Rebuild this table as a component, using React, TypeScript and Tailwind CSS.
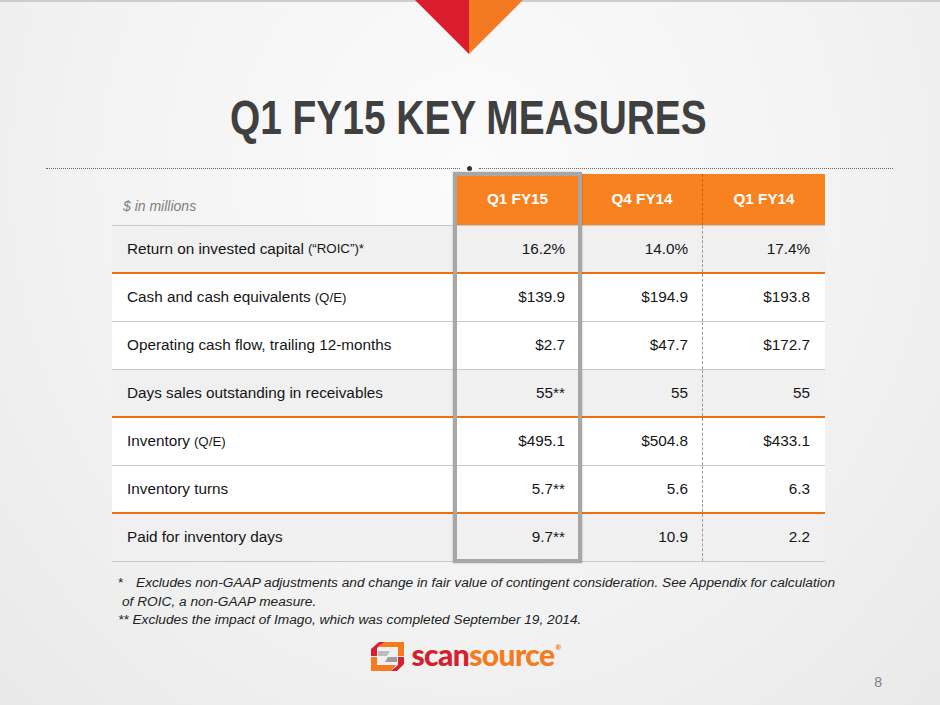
import React from 'react';

type Row = {
  label: string;
  note?: string;
  values: [string, string, string];
  shaded: boolean;
  line: 'orange' | 'gray';
};

const rows: Row[] = [
  { label: 'Return on invested capital', note: '(“ROIC”)*', values: ['16.2%', '14.0%', '17.4%'], shaded: true, line: 'orange' },
  { label: 'Cash and cash equivalents', note: '(Q/E)', values: ['$139.9', '$194.9', '$193.8'], shaded: false, line: 'gray' },
  { label: 'Operating cash flow, trailing 12-months', values: ['$2.7', '$47.7', '$172.7'], shaded: false, line: 'gray' },
  { label: 'Days sales outstanding in receivables', values: ['55**', '55', '55'], shaded: true, line: 'orange' },
  { label: 'Inventory', note: '(Q/E)', values: ['$495.1', '$504.8', '$433.1'], shaded: false, line: 'gray' },
  { label: 'Inventory turns', values: ['5.7**', '5.6', '6.3'], shaded: false, line: 'orange' },
  { label: 'Paid for inventory days', values: ['9.7**', '10.9', '2.2'], shaded: true, line: 'gray' },
];

// scansource mark, drawn roughly from the slide
function LogoMark() {
  return (
    <svg width="33" height="29" viewBox="0 0 33 29">
      <polygon points="12,0 33,0 33,14 27,14 27,5 8,5" fill="#f47b20" />
      <polygon points="0,7 8,0 13,0 6,6 6,14 0,14" fill="#d7202f" />
      <polygon points="7,9 19,9 16,14 7,14" fill="#bdbdbd" />
      <polygon points="17,15 26,15 26,20 14,20" fill="#9e9e9e" />
      <polygon points="0,15 6,15 6,23 25,23 20,29 0,29" fill="#f47b20" />
      <polygon points="27,15 33,15 33,22 26,29 20,29 27,23" fill="#d7202f" />
    </svg>
  );
}

export default function App() {
  return (
    <div className="w-[940px] h-[705px] overflow-hidden flex flex-col font-['Liberation_Sans',Arial,sans-serif] bg-[radial-gradient(ellipse_at_50%_25%,#fbfbfb_0%,#f3f3f3_55%,#e9e9e9_100%)]">
      <div className="h-[2px] bg-[#cdcdcd]" />

      {/* top triangle */}
      <div className="flex justify-center -mt-[2px]">
        <svg width="108" height="54" viewBox="0 0 108 54" className="ml-[-2px]">
          <polygon points="0,0 54,0 54,54" fill="#da1c2d" />
          <polygon points="54,0 108,0 54,54" fill="#f47a21" />
        </svg>
      </div>

      <h1 className="mt-[40px] text-center text-[48px] leading-none font-bold text-[#404040]">
        <span className="inline-block scale-x-[0.81] ml-[-4px]">Q1 FY15 KEY MEASURES</span>
      </h1>

      {/* dotted rule with centre dot */}
      <div className="mt-[24px] h-[5px] flex items-center pl-[46px] pr-[47px]">
        <div className="flex-1 border-t border-dotted border-[#666]" />
        <div className="w-[5px] h-[5px] rounded-full bg-[#333] mx-[7px]" />
        <div className="flex-1 border-t border-dotted border-[#666]" />
      </div>

      {/* table */}
      <div className="relative ml-[112px] mt-[3px] w-[713px] text-[15.3px] text-[#161616]">
        <div className="grid grid-cols-[341px_129px_120px_123px] h-[52px] border-b border-[#c8c8c8]">
          <div className="flex items-end pb-[8px] pl-[11px] text-[14px] italic text-[#7f7f7f]">$ in millions</div>
          <div className="flex items-center justify-center bg-[#f7821f] text-white font-bold">Q1 FY15</div>
          <div className="flex items-center justify-center bg-[#f7821f] text-white font-bold">Q4 FY14</div>
          <div className="flex items-center justify-center bg-[#f7821f] text-white font-bold border-l border-dashed border-[#c46010]">Q1 FY14</div>
        </div>

        {rows.map((r) => (
          <div
            key={r.label}
            className={`grid grid-cols-[341px_129px_120px_123px] h-[48px] ${r.shaded ? 'bg-[#f0f0f0]' : 'bg-white'} ${r.line === 'orange' ? 'border-b-2 border-[#ef6e10]' : 'border-b border-[#c8c8c8]'}`}
          >
            <div className="flex items-center pl-[15px]">
              {r.label}
              {r.note && <span className="ml-[4px] text-[13.3px]">{r.note}</span>}
            </div>
            <div className="flex items-center justify-end pr-[17px]">{r.values[0]}</div>
            <div className="flex items-center justify-end pr-[14px]">{r.values[1]}</div>
            <div className="flex items-center justify-end pr-[15px] border-l border-dashed border-[#9a9a9a]">{r.values[2]}</div>
          </div>
        ))}

        {/* highlight box over the current quarter */}
        <div className="absolute left-[341px] -top-[2px] w-[129px] h-[391px] border-[4px] border-[#a7a7a7] shadow-[0_0_2px_rgba(0,0,0,0.25)] pointer-events-none" />
      </div>

      {/* footnotes */}
      <div className="mt-[12px] ml-[118px] text-[13.7px] leading-[18.5px] italic text-[#222]">
        <div>
          <span className="inline-block w-[18px] not-italic">*</span>Excludes non-GAAP adjustments and change in fair value of contingent consideration. See Appendix for calculation
        </div>
        <div className="pl-[4px]">of ROIC, a non-GAAP measure.</div>
        <div>** Excludes the impact of Imago, which was completed September 19, 2014.</div>
      </div>

      {/* footer: logo + page number */}
      <div className="mt-[12px] grid grid-cols-[1fr_auto_1fr]">
        <div />
        <div className="flex items-center gap-[7px] ml-[-8px]">
          <LogoMark />
          <div className="flex items-start font-['Lato',sans-serif] font-black text-[30px] leading-none tracking-[-0.6px] -mt-[5px]">
            <span className="text-[#d7202f]">scan</span>
            <span className="text-[#f47b20]">source</span>
            <span className="text-[#f47b20] text-[7px] mt-[5px] ml-[1px]">®</span>
          </div>
        </div>
        <div className="flex justify-end items-end pr-[58px]">
          <span className="text-[14px] text-[#808080] translate-y-[22px]">8</span>
        </div>
      </div>
    </div>
  );
}
